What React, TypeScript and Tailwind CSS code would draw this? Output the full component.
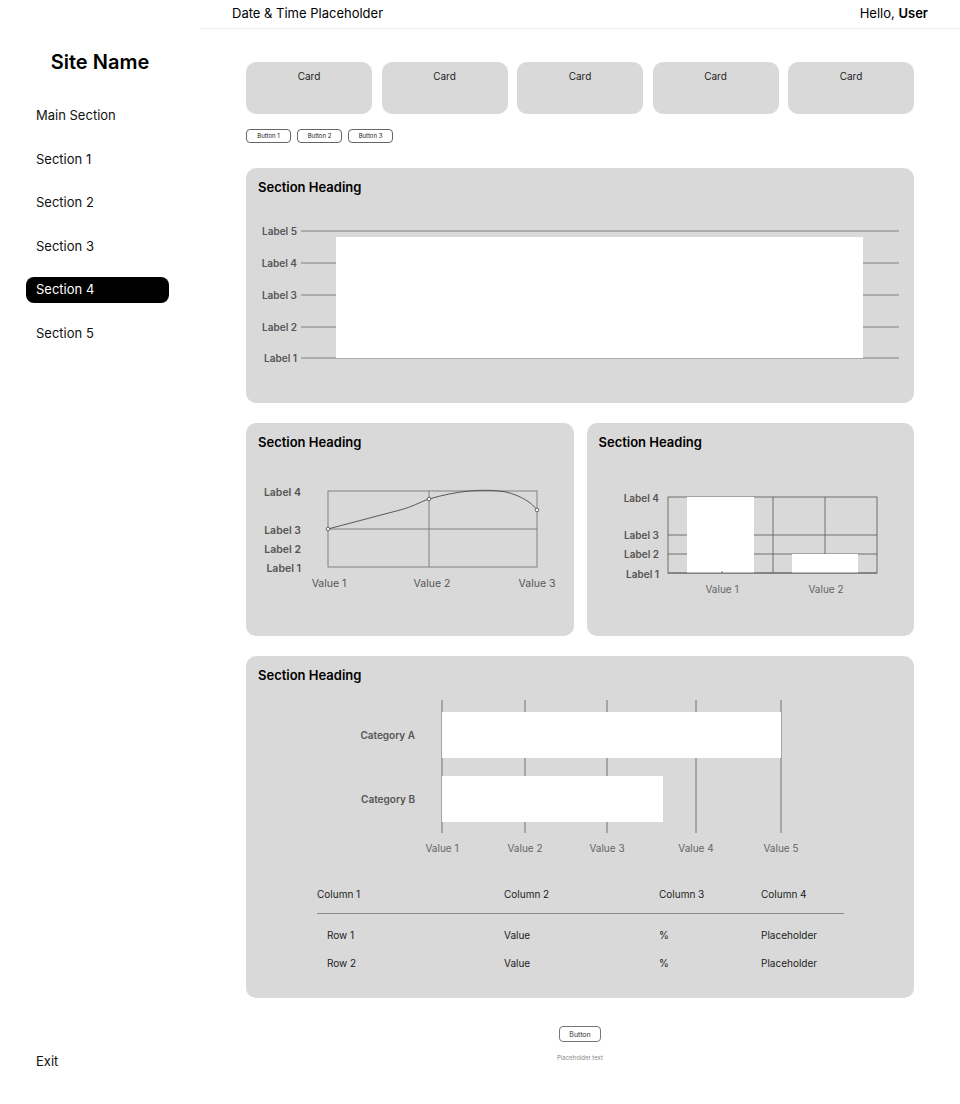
import React from 'react';

const navItems = ['Main Section', 'Section 1', 'Section 2', 'Section 3', 'Section 4', 'Section 5'];

const Sidebar = () => (
  <aside className="w-[200px] shrink-0 h-[1104px] flex flex-col">
    <h1 className="pt-12 text-center text-[20px] leading-[28px] font-semibold text-black">Site Name</h1>
    <nav className="mt-[27px] ml-[26px] w-[143px] flex flex-col gap-[17.5px]">
      {navItems.map(item => (
        <div
          key={item}
          className={`h-[26px] px-[10px] flex items-center rounded-[8px] text-[13px] ${
            item === 'Section 4' ? 'bg-black text-white' : 'text-[#111]'
          }`}
        >
          {item}
        </div>
      ))}
    </nav>
    <div className="mt-auto pl-[36px] pb-[34px] text-[13px] leading-[18px] text-[#111]">Exit</div>
  </aside>
);

const LineChart = () => (
  <svg width="328" height="181" className="block">
    {/* grid */}
    <rect x="82" y="36" width="209" height="76" fill="none" stroke="#6b6b6b" strokeWidth="0.8" />
    <line x1="82" y1="74" x2="291" y2="74" stroke="#6b6b6b" strokeWidth="0.8" />
    <line x1="183" y1="36" x2="183" y2="112" stroke="#6b6b6b" strokeWidth="0.8" />
    <path
      d="M82 74 L154 55 C166 52 174 47 183 44 C210 36 238 33 260 37 C276 41 286 48 291 55"
      fill="none"
      stroke="#4a4a4a"
      strokeWidth="0.9"
    />
    {[[82, 74], [183, 44], [291, 55]].map(([cx, cy]) => (
      <circle key={cx} cx={cx} cy={cy} r="1.8" fill="#fff" stroke="#4a4a4a" strokeWidth="0.8" />
    ))}
    {/* labels */}
    <g fontSize="10.5" fontWeight="600" fill="#555" textAnchor="end">
      <text x="55" y="40.5">Label 4</text>
      <text x="55" y="78.5">Label 3</text>
      <text x="55" y="97.5">Label 2</text>
      <text x="55" y="116.5">Label 1</text>
    </g>
    <g fontSize="10.5" fill="#555" textAnchor="middle">
      <text x="83" y="131.5">Value 1</text>
      <text x="186" y="131.5">Value 2</text>
      <text x="291" y="131.5">Value 3</text>
    </g>
  </svg>
);

const BarChart = () => (
  <svg width="328" height="181" className="block">
    <rect x="81" y="42" width="209" height="76" fill="none" stroke="#555" strokeWidth="0.8" />
    <line x1="81" y1="80" x2="290" y2="80" stroke="#555" strokeWidth="0.8" />
    <line x1="81" y1="99" x2="290" y2="99" stroke="#555" strokeWidth="0.8" />
    <line x1="186" y1="42" x2="186" y2="118" stroke="#555" strokeWidth="0.8" />
    <line x1="238" y1="42" x2="238" y2="118" stroke="#555" strokeWidth="0.8" />
    <rect x="100" y="42" width="67" height="76" fill="#fff" />
    <rect x="205" y="99" width="66" height="19" fill="#fff" />
    <line x1="81" y1="118" x2="290" y2="118" stroke="#555" strokeWidth="0.8" />
    <line x1="135" y1="116" x2="135" y2="118" stroke="#555" strokeWidth="0.8" />
    <g fontSize="10" fontWeight="600" fill="#555" textAnchor="end">
      <text x="72" y="46.5">Label 4</text>
      <text x="72" y="83.5">Label 3</text>
      <text x="72" y="102.5">Label 2</text>
      <text x="72" y="122.5">Label 1</text>
    </g>
    <g fontSize="10" fill="#666" textAnchor="middle">
      <text x="135" y="137.5">Value 1</text>
      <text x="239" y="137.5">Value 2</text>
    </g>
  </svg>
);

const TopChart = () => (
  <svg width="668" height="203" className="block">
    {[31, 63, 95, 127, 158].map(y => (
      <line key={y} x1="55" y1={y} x2="653" y2={y} stroke="#777" strokeWidth="0.9" />
    ))}
    <rect x="90" y="37" width="527" height="121" fill="#fff" />
    <g fontSize="10" fontWeight="600" fill="#555" textAnchor="end">
      <text x="51" y="34.5">Label 5</text>
      <text x="51" y="66.5">Label 4</text>
      <text x="51" y="98.5">Label 3</text>
      <text x="51" y="130.5">Label 2</text>
      <text x="51" y="161.5">Label 1</text>
    </g>
  </svg>
);

const HBarChart = () => {
  const ticks = [196, 279, 361, 450, 535];
  return (
    <svg width="668" height="170" className="block">
      {ticks.map(x => (
        <line key={x} x1={x} y1="12" x2={x} y2="145" stroke="#666" strokeWidth="0.9" />
      ))}
      <rect x="196" y="24" width="339" height="46" fill="#fff" />
      <rect x="196" y="88" width="221" height="46" fill="#fff" />
      <g fontSize="10" fontWeight="600" fill="#555" textAnchor="end">
        <text x="169" y="50.5">Category A</text>
        <text x="169" y="114.5">Category B</text>
      </g>
      <g fontSize="10" fill="#666" textAnchor="middle">
        {ticks.map((x, i) => (
          <text key={x} x={x} y="163.5">{`Value ${i + 1}`}</text>
        ))}
      </g>
    </svg>
  );
};

const rows = [
  ['Row 1', 'Value', '%', 'Placeholder'],
  ['Row 2', 'Value', '%', 'Placeholder'],
];

const App = () => {
  return (
    <div className="flex min-h-screen bg-white font-['Inter',sans-serif] text-black">
      <Sidebar />
      <main className="flex-1 flex flex-col">
        {/* Header */}
        <header className="h-[29px] px-8 flex items-center justify-between border-b border-[#ececec] text-[13px]">
          <span>Date &amp; Time Placeholder</span>
          <span>
            Hello, <span className="font-semibold">User</span>
          </span>
        </header>

        <div className="px-[46px] pt-[33px]">
          {/* Cards */}
          <div className="grid grid-cols-5 gap-[9.5px]">
            {[1, 2, 3, 4, 5].map(i => (
              <div key={i} className="h-[52px] rounded-[10px] bg-[#d9d9d9] pt-[8px] text-center text-[10px] leading-[12px] text-[#222]">
                Card
              </div>
            ))}
          </div>

          <div className="mt-[15px] flex gap-[6px]">
            {['Button 1', 'Button 2', 'Button 3'].map(b => (
              <button key={b} className="h-[14px] w-[45px] rounded-[4px] border border-[#666] text-[6px] leading-none text-[#222]">
                {b}
              </button>
            ))}
          </div>

          {/* Section 1 */}
          <section className="mt-[25px] h-[235px] rounded-[10px] bg-[#d9d9d9] pt-3">
            <h2 className="px-3 text-[13px] leading-[14px] font-semibold">Section Heading</h2>
            <div className="mt-[6px]">
              <TopChart />
            </div>
          </section>

          {/* Section 2 + 3 */}
          <div className="mt-[20px] grid grid-cols-2 gap-[13px]">
            <section className="h-[213px] rounded-[10px] bg-[#d9d9d9] pt-3">
              <h2 className="px-3 text-[13px] leading-[14px] font-semibold">Section Heading</h2>
              <div className="mt-[6px]">
                <LineChart />
              </div>
            </section>
            <section className="h-[213px] rounded-[10px] bg-[#d9d9d9] pt-3">
              <h2 className="px-3 text-[13px] leading-[14px] font-semibold">Section Heading</h2>
              <div className="mt-[6px]">
                <BarChart />
              </div>
            </section>
          </div>

          {/* Section 4 */}
          <section className="mt-[20px] rounded-[10px] bg-[#d9d9d9] pt-3 pb-[21px]">
            <h2 className="px-3 text-[13px] leading-[14px] font-semibold">Section Heading</h2>
            <div className="mt-[6px]">
              <HBarChart />
            </div>
            <div className="mt-[26px] ml-[71px] w-[527px] text-[10px] text-[#222]">
              <div className="grid grid-cols-[187px_155px_102px_83px] pb-[9px] border-b border-[#8a8a8a] leading-[20px]">
                <span>Column 1</span>
                <span>Column 2</span>
                <span>Column 3</span>
                <span>Column 4</span>
              </div>
              <div className="mt-[7px]">
                {rows.map(r => (
                  <div key={r[0]} className="grid grid-cols-[187px_155px_102px_83px] h-[28px] items-center">
                    <span className="pl-[10px]">{r[0]}</span>
                    <span>{r[1]}</span>
                    <span>{r[2]}</span>
                    <span>{r[3]}</span>
                  </div>
                ))}
              </div>
            </div>
          </section>

          {/* Footer */}
          <div className="mt-[28px] flex flex-col items-center">
            <button className="h-[16px] w-[42px] rounded-[4px] border border-[#777] text-[7px] leading-none text-[#333]">
              Button
            </button>
            <p className="mt-[11px] text-[6px] text-[#888]">Placeholder text</p>
          </div>
        </div>
      </main>
    </div>
  );
};

export default App;
